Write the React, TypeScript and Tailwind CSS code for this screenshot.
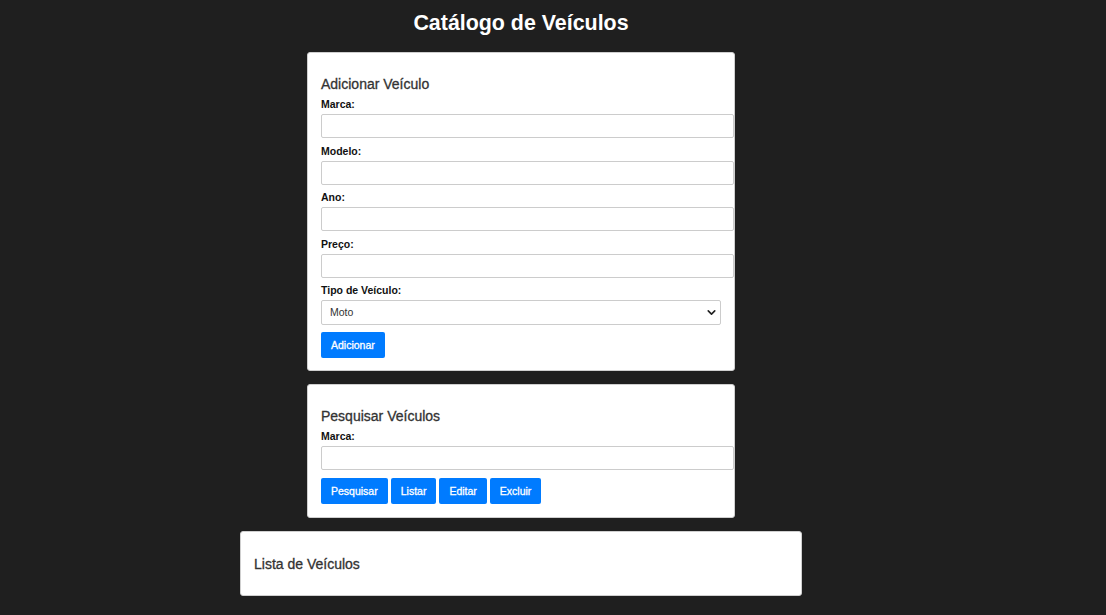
import React from 'react';
import { ChevronDown } from 'lucide-react';

const font = { fontFamily: '"Liberation Sans", Arial, sans-serif' };

function Field({ label }: { label: string }) {
  return (
    <div className="mb-[6.5px]">
      <label className="block text-[10.5px] leading-[12px] font-bold text-[#111] mb-[4px]">{label}</label>
      <input type="text" className="block h-[24px] w-[413px] border border-[#cccccc] rounded-[2px] bg-white px-[6px] text-[10.5px] outline-none" />
    </div>
  );
}

function Btn({ children }: { children: React.ReactNode }) {
  return (
    <button className="h-[26px] px-[10px] rounded-[2px] bg-[#007bff] text-white text-[10.5px] leading-[26px] [-webkit-text-stroke:0.3px_white]">
      {children}
    </button>
  );
}

export default function App() {
  return (
    <div className="min-h-[615px] w-full bg-[#1f1f1f]" style={font}>
      <div className="w-[1042px] flex flex-col items-center pt-[11px] pb-[19px]">
        <h1 className="text-[21.4px] leading-[24px] font-bold text-white">Catálogo de Veículos</h1>

        <div className="mt-[17px] w-[428px] bg-white border border-[#cfcfcf] rounded-[3px] px-[13px] pt-[13px] pb-[12px]">
          <h3 className="mt-[10px] mb-[6px] text-[14px] leading-[16px] text-[#333] [-webkit-text-stroke:0.3px_#333]">Adicionar Veículo</h3>
          <Field label="Marca:" />
          <Field label="Modelo:" />
          <Field label="Ano:" />
          <Field label="Preço:" />
          <div>
            <label className="block text-[10.5px] leading-[12px] font-bold text-[#111] mb-[4px]">Tipo de Veículo:</label>
            <div className="relative w-[400px]">
              <select defaultValue="Moto" className="block h-[25px] w-[400px] appearance-none border border-[#cccccc] rounded-[2px] bg-white pl-[8px] text-[10.5px] text-[#333] outline-none">
                <option>Carro</option>
                <option>Moto</option>
                <option>Caminhão</option>
              </select>
              <ChevronDown size={13} strokeWidth={3} className="absolute right-[3px] top-[6px] text-[#222] pointer-events-none" />
            </div>
          </div>
          <div className="mt-[7px]">
            <Btn>Adicionar</Btn>
          </div>
        </div>

        <div className="mt-[13px] w-[428px] bg-white border border-[#cfcfcf] rounded-[3px] px-[13px] pt-[13px] pb-[13px]">
          <h3 className="mt-[10px] mb-[6px] text-[14px] leading-[16px] text-[#333] [-webkit-text-stroke:0.3px_#333]">Pesquisar Veículos</h3>
          <label className="block text-[10.5px] leading-[12px] font-bold text-[#111] mb-[4px]">Marca:</label>
          <input type="text" className="block h-[24px] w-[413px] border border-[#cccccc] rounded-[2px] bg-white px-[6px] text-[10.5px] outline-none" />
          <div className="mt-[8px] flex gap-[3px]">
            <Btn>Pesquisar</Btn>
            <Btn>Listar</Btn>
            <Btn>Editar</Btn>
            <Btn>Excluir</Btn>
          </div>
        </div>

        <div className="mt-[13px] w-[562px] bg-white border border-[#cfcfcf] rounded-[3px] px-[13px] py-[13px]">
          <h3 className="my-[10.5px] text-[14px] leading-[16px] text-[#333] [-webkit-text-stroke:0.3px_#333]">Lista de Veículos</h3>
        </div>
      </div>
    </div>
  );
}
